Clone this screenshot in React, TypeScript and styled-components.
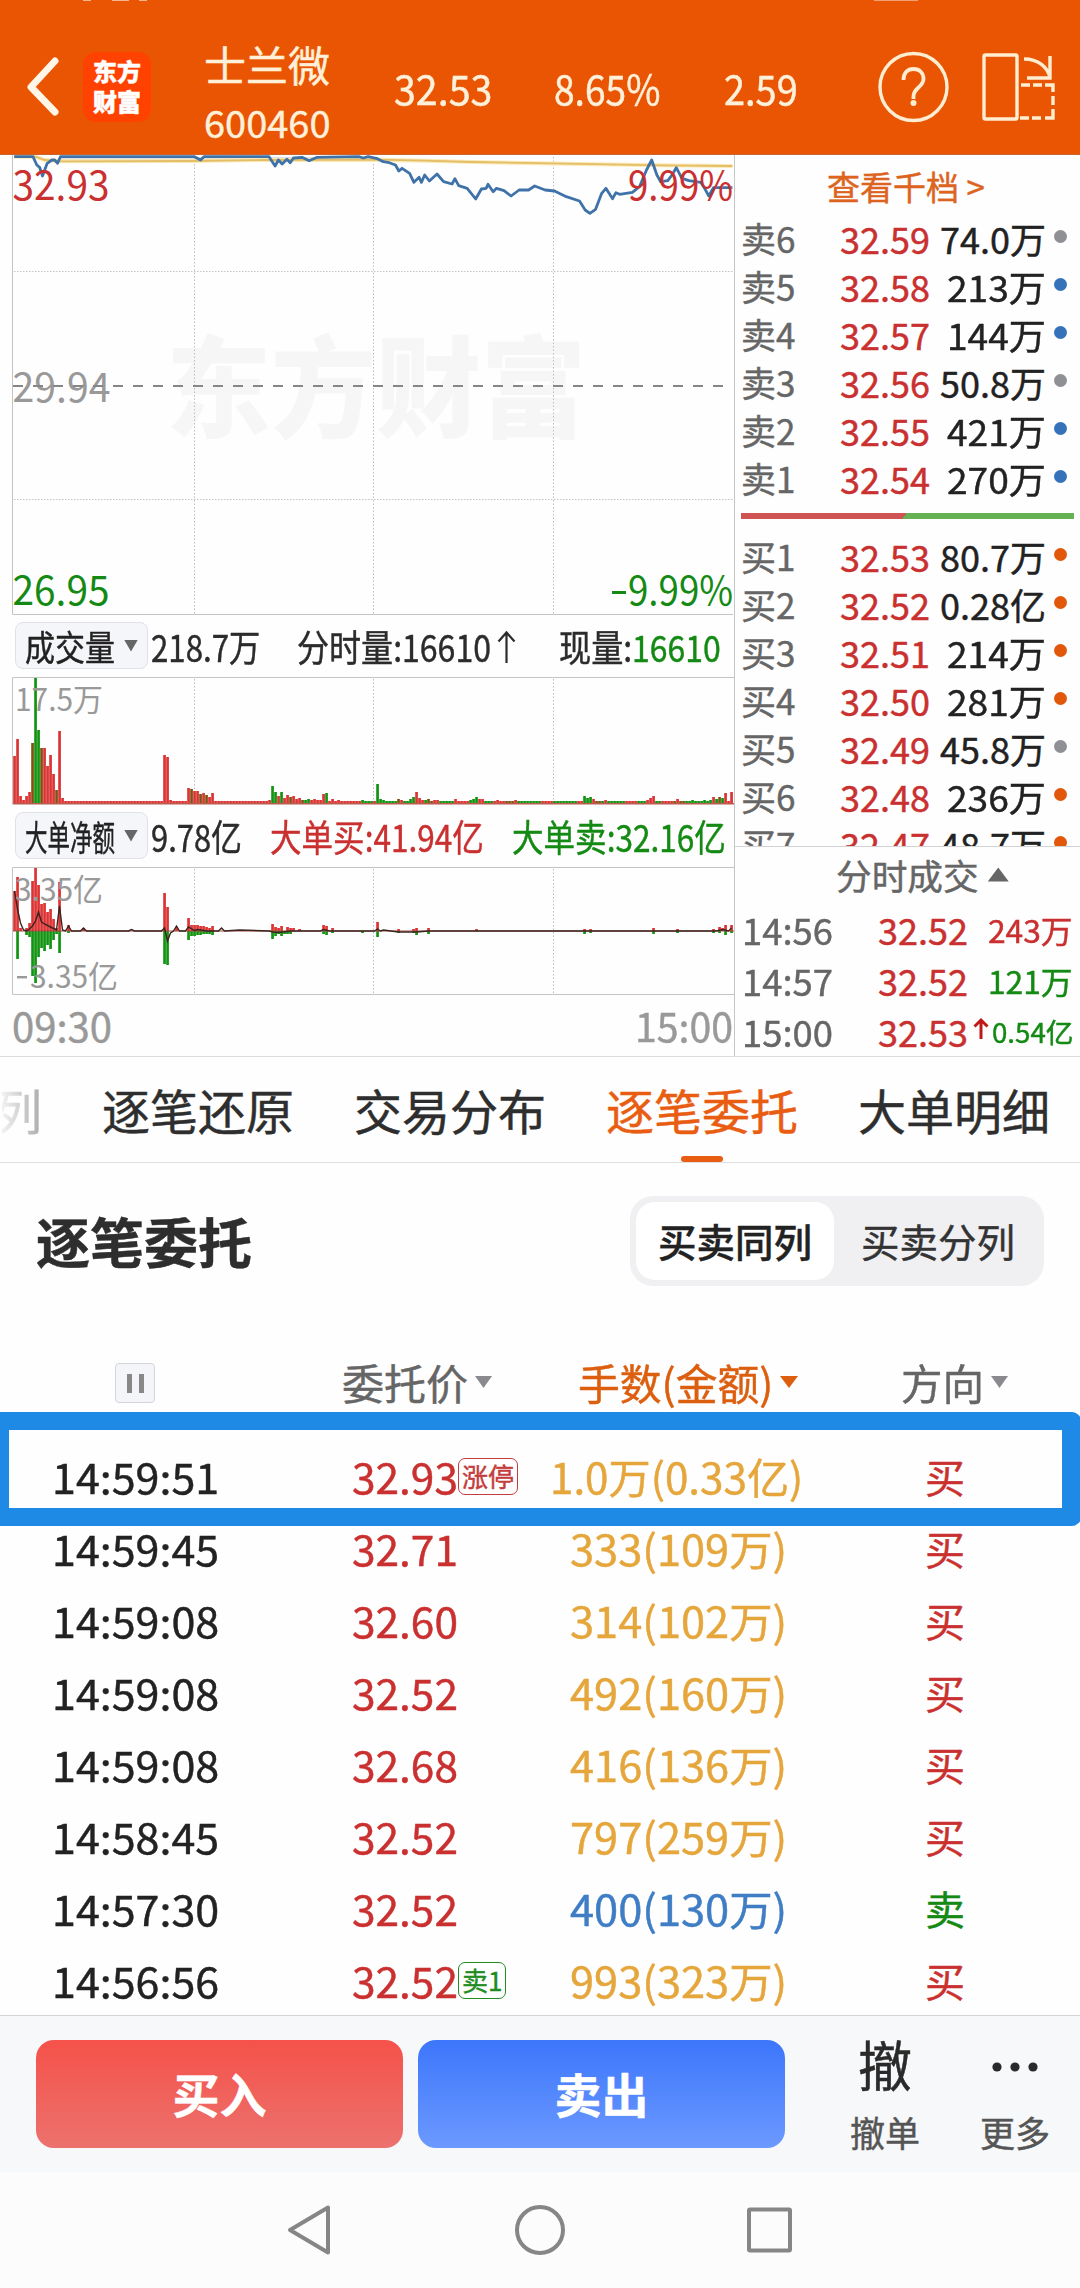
import React, { useLayoutEffect, useRef, useState } from "react";
import styled, { createGlobalStyle } from "styled-components";

const RED = "#c9302f";
const GREEN = "#148a14";
const ORANGE = "#e2580b";
const GOLD = "#e5a63c";
const FONT = '"Noto Sans CJK SC", "Noto Sans", sans-serif';

const Global = createGlobalStyle`
  * { box-sizing: border-box; }
  body { margin: 0; background: #fff; font-family: ${FONT}; overflow-x: hidden; }
`;

/* Text squeezed or stretched horizontally to a fixed advance width */
const FitBox = styled.span<{ $w: number }>`
  display: inline-block;
  flex: none;
  width: ${(p) => p.$w}px;
  white-space: pre;
`;
const FitInner = styled.span`
  display: inline-block;
  transform-origin: 0 50%;
`;
function Fit({ w, children }: { w: number; children: React.ReactNode }) {
  const ref = useRef<HTMLSpanElement>(null);
  const [k, setK] = useState(1);
  useLayoutEffect(() => {
    if (ref.current) setK(w / ref.current.offsetWidth);
  }, [w]);
  return (
    <FitBox $w={w}>
      <FitInner ref={ref} style={{ transform: `scaleX(${k})` }}>
        {children}
      </FitInner>
    </FitBox>
  );
}

const Screen = styled.div`
  width: 1080px;
  height: 2288px;
  display: flex;
  flex-direction: column;
  background: #fefefe;
  color: #2b2b2b;
  overflow: hidden;
  -webkit-text-stroke: 0.45px currentColor;
`;

/* ---------- header ---------- */
const Header = styled.header`
  position: relative;
  height: 155px;
  flex: none;
  background: #e95502;
  color: #fff0d9;
  display: grid;
  grid-template-columns: 83px 121px 190px 160px 170px 154px 103px 1fr;
  align-items: center;
  padding-top: 20px;
  border-bottom: 1px solid #c8642c;

  &::before {
    content: "";
    position: absolute;
    left: 0;
    right: 0;
    top: 0;
    height: 1px;
    background: linear-gradient(
      90deg,
      transparent 83px, #f3b48c 83px 91px, transparent 91px 112px, #f3b48c 112px 129px,
      transparent 129px 139px, #f3b48c 139px 147px, transparent 147px 874px, #f3a070 874px 918px, transparent 918px
    );
  }
`;
const BackIcon = styled.svg`
  margin-left: 22px;
`;
const Logo = styled.div`
  width: 68px;
  height: 70px;
  border-radius: 13px;
  background: #ff4200;
  color: #fff;
  font: 900 24px/30px ${FONT};
  text-align: center;
  padding-top: 4px;
`;
const StockName = styled.div`
  display: flex;
  flex-direction: column;
  font-size: 42px;
  line-height: 60px;
  padding-top: 9px;
`;
const StockCode = styled.div`
  font-size: 38px;
  line-height: 56px;
`;
const Quote = styled.div`
  font-size: 41px;
  line-height: 60px;
`;

/* ---------- market area ---------- */
const Market = styled.section`
  height: 902px;
  flex: none;
  display: grid;
  grid-template-columns: 735px 345px;
  border-bottom: 1px solid #dcdcdc;
`;
const ChartColumn = styled.div`
  border-right: 1px solid #c6c6c6;
  display: flex;
  flex-direction: column;
  overflow: hidden;
`;
const ChartSvg = styled.svg`
  display: block;
  flex: none;
  font-family: ${FONT};
`;
const InfoRow = styled.div`
  height: 62px;
  flex: none;
  display: flex;
  align-items: center;
  padding: 0 0 1px 15px;
  font-size: 37px;
  line-height: 56px;
  color: #2b2b2b;
`;
const Select = styled.div`
  width: 133px;
  height: 47px;
  flex: none;
  margin-right: 3px;
  padding-left: 9px;
  display: flex;
  align-items: center;
  gap: 9px;
  border: 1px solid #e0e2e8;
  border-radius: 8px;
  background: #f4f6fa;
  font-size: 35px;
  line-height: 40px;
  color: #222;
`;
const Segment = styled.span<{ $color?: string; $gap?: number }>`
  margin-left: ${(p) => p.$gap ?? 0}px;
  color: ${(p) => p.$color ?? "inherit"};
`;
const Caret = styled.i<{ $size: number; $h: number; $color: string; $up?: boolean }>`
  display: inline-block;
  flex: none;
  width: ${(p) => p.$size}px;
  height: ${(p) => p.$h}px;
  background: ${(p) => p.$color};
  clip-path: ${(p) => (p.$up ? "polygon(50% 0, 100% 100%, 0 100%)" : "polygon(0 0, 100% 0, 50% 100%)")};
`;
const TimeAxis = styled.div`
  flex: 1;
  display: flex;
  justify-content: space-between;
  padding: 0 1px 0 12px;
  font-size: 40px;
  line-height: 61px;
  color: #999;
`;

/* ---------- order book ---------- */
const BookColumn = styled.div`
  display: flex;
  flex-direction: column;
  overflow: hidden;
`;
const DepthLink = styled.div`
  height: 59px;
  flex: none;
  padding: 3px 0 0 92px;
  font-size: 33px;
  line-height: 56px;
  color: #dc6420;
`;
const BookList = styled.div`
  height: 633px;
  flex: none;
  overflow: hidden;
  border-bottom: 1px solid #d2d2d2;
`;
const BookRow = styled.div`
  height: 48px;
  display: grid;
  grid-template-columns: 99px 92px 1fr 34px;
  align-items: center;
  padding-left: 6px;
  font-size: 36px;
  line-height: 48px;
  white-space: nowrap;
`;
const Level = styled.span`
  color: #666;
  font-size: 35px;
`;
const Price = styled.span`
  color: ${RED};
`;
const Volume = styled.span`
  display: flex;
  justify-content: flex-end;
  font-size: 36px;
  color: #222;
`;
const Dot = styled.i<{ $color: string }>`
  width: 13px;
  height: 13px;
  margin: 0 0 4px 8px;
  border-radius: 50%;
  background: ${(p) => p.$color};
`;
const RatioBar = styled.div`
  height: 6px;
  margin: 11px 6px 13px 6px;
  background: linear-gradient(125deg, #cf5353 0 49.1%, #66b154 49.1%);
`;
const TradesTitle = styled.div`
  height: 59px;
  flex: none;
  display: flex;
  align-items: center;
  gap: 9px;
  padding: 0 0 4px 101px;
  font-size: 35.7px;
  line-height: 56px;
  color: #666;
`;
const TradeRow = styled.div`
  height: 51px;
  flex: none;
  display: grid;
  grid-template-columns: 136px 92px 1fr;
  align-items: center;
  padding: 0 7px 4px 7px;
  font-size: 36px;
  line-height: 47px;
  color: #666;
  white-space: nowrap;
`;
const TradeVolume = styled.span<{ $color: string; $size: number }>`
  display: flex;
  align-items: center;
  justify-content: flex-end;
  gap: 3px;
  font-size: ${(p) => p.$size}px;
  color: ${(p) => p.$color};
`;

/* ---------- tabs ---------- */
const Tabs = styled.nav`
  height: 106px;
  flex: none;
  display: flex;
  gap: 60px;
  padding-left: 2px;
  border-bottom: 1px solid #e0e0e0;
  font-size: 48px;
  line-height: 105px;
  white-space: nowrap;
`;
const Tab = styled.div<{ $active?: boolean }>`
  position: relative;
  color: ${(p) => (p.$active ? "#e95d12" : "#2e2e2e")};
  ${(p) =>
    p.$active &&
    `&::after {
      content: "";
      position: absolute;
      left: 75px;
      bottom: 0;
      width: 42px;
      height: 6px;
      border-radius: 3px;
      background: #e95d12;
    }`}
`;
const FadedTab = styled.div`
  width: 40px;
  display: flex;
  justify-content: flex-end;
  background: linear-gradient(90deg, #f2f2f2, #aaa);
  background-clip: text;
  color: transparent;
`;

/* ---------- orders ---------- */
const PanelHead = styled.div`
  height: 156px;
  flex: none;
  display: flex;
  justify-content: space-between;
  align-items: center;
  padding: 0 36px 0 36px;
`;
const PanelTitle = styled.h2`
  margin: 0;
  font-size: 54px;
  line-height: 76px;
  font-weight: 700;
  color: #2e2e2e;
`;
const Switcher = styled.div`
  width: 414px;
  height: 90px;
  padding: 6px;
  display: grid;
  grid-template-columns: 198px 1fr;
  border-radius: 23px;
  background: #f0f0f3;
`;
const SwitchItem = styled.div<{ $on?: boolean }>`
  border-radius: 19px;
  background: ${(p) => (p.$on ? "#fff" : "transparent")};
  font-weight: ${(p) => (p.$on ? 500 : 400)};
  color: ${(p) => (p.$on ? "#222" : "#333")};
  font-size: 38.5px;
  line-height: 76px;
  text-align: center;
  padding-left: ${(p) => (p.$on ? 0 : 4)}px;
`;
const TableHead = styled.div`
  height: 93px;
  flex: none;
  display: grid;
  grid-template-columns: 342px 236px 323px 1fr;
  align-items: start;
  font-size: 42px;
  line-height: 60px;
  color: #666;
  padding-top: 33px;
`;
const HeadCell = styled.div<{ $color?: string }>`
  display: flex;
  align-items: center;
  gap: 7px;
  color: ${(p) => p.$color ?? "#666"};
`;
const PauseButton = styled.div`
  width: 40px;
  height: 40px;
  margin: 11px 0 0 115px;
  display: flex;
  justify-content: center;
  align-items: center;
  gap: 7px;
  border: 1px solid #d3d5da;
  border-radius: 4px;
  background: #f3f5f9;
`;
const PauseBar = styled.i`
  width: 5px;
  height: 19px;
  background: #888;
`;
const OrderList = styled.div`
  position: relative;
  height: 604px;
  flex: none;
  padding-top: 28px;
  border-bottom: 1px solid #d2d4d6;
`;
const OrderRow = styled.div`
  height: 72px;
  display: grid;
  grid-template-columns: 352px 107px 91px 250px 1fr;
  align-items: center;
  font-size: 42px;
  line-height: 66px;
  white-space: nowrap;
`;
const OrderTime = styled.span`
  padding-left: 52px;
  color: #222;
`;
const TagCell = styled.span`
  display: flex;
`;
const Badge = styled.span<{ $color: string }>`
  height: 37px;
  padding: 0 3px;
  margin-left: -1px;
  border: 1.5px solid ${(p) => p.$color};
  border-radius: 7px;
  font-size: 26px;
  line-height: 33px;
  color: ${(p) => p.$color};
`;
const Amount = styled.span<{ $color: string }>`
  text-align: center;
  color: ${(p) => p.$color};
`;
const Side = styled.span<{ $color: string }>`
  padding-left: 125px;
  font-size: 40px;
  color: ${(p) => p.$color};
`;
const Highlight = styled.div`
  position: absolute;
  left: -10px;
  right: -1px;
  top: 0;
  height: 114px;
  border: solid #1f8ae6;
  border-width: 18px 19px 18px 19px;
  border-radius: 9px;
`;

/* ---------- bottom ---------- */
const ActionBar = styled.div`
  height: 156px;
  flex: none;
  background: #f6f8fa;
  display: grid;
  grid-template-columns: 367px 367px 170px 60px;
  column-gap: 15px;
  padding: 24px 0 0 36px;
`;
const TradeButton = styled.div<{ $from: string; $to: string }>`
  height: 108px;
  border-radius: 18px;
  background: linear-gradient(${(p) => p.$from}, ${(p) => p.$to});
  color: #fff;
  font-size: 47px;
  font-weight: 700;
  line-height: 106px;
  text-align: center;
`;
const Tool = styled.div`
  display: flex;
  flex-direction: column;
  align-items: center;
  font-size: 35px;
  line-height: 50px;
  color: #555;
  white-space: nowrap;
`;
const ToolGlyph = styled.div`
  height: 67px;
  font-size: 54px;
  line-height: 48px;
  color: #2a2a2a;
  display: flex;
  align-items: flex-start;
`;
const NavBar = styled.div`
  flex: 1;
  background: #fcfcfc;
`;

/* ---------- data ---------- */
type Pt = [number, number];
const pricePath: Pt[] = [
  [30, 20], [70, 20], [78, 45], [84, 52], [90, 78], [100, 40], [110, 30], [116, 30], [122, 40], [128, 20], [412, 20], [425, 30], [432, 20],
  [570, 20], [583, 48], [590, 30], [598, 42], [608, 28], [615, 38], [622, 24], [640, 22], [655, 32], [672, 22], [760, 20], [770, 24], [780, 20], [800, 26],
  [812, 35], [825, 38], [838, 45], [845, 63], [852, 55], [868, 70], [877, 97], [888, 82], [893, 97], [900, 75], [910, 93],
  [926, 72], [940, 95], [958, 102], [964, 86], [972, 107], [990, 115], [1008, 147], [1020, 117], [1030, 115], [1034, 103], [1045, 125],
  [1052, 115], [1068, 122], [1083, 138], [1100, 120], [1120, 120], [1133, 108], [1155, 120], [1175, 123], [1200, 140],
  [1228, 153], [1240, 180], [1250, 190], [1262, 178], [1275, 130], [1284, 115], [1298, 146], [1305, 128], [1313, 133],
  [1340, 127], [1355, 110], [1370, 60], [1381, 30], [1392, 75], [1400, 95], [1415, 92], [1424, 75], [1433, 53], [1445, 85],
  [1460, 92], [1485, 97], [1493, 115], [1502, 138], [1512, 113], [1552, 113],
];
const averagePath: Pt[] = [
  [30, 20], [75, 20], [95, 30], [130, 34], [400, 33], [560, 30], [800, 29], [900, 32], [1000, 36], [1200, 41], [1400, 46], [1552, 48],
];
const toLine = (pts: Pt[]) => pts.map(([x, y]) => `${(x / 2.119).toFixed(1)},${(y / 3 - 5).toFixed(1)}`).join(" ");

const R = "#dc3434";
const G = "#129412";
const B = "#7d5414";
const volume: Record<number, [number, string]> = {
  0: [48, R], 1: [65, R], 2: [8, R], 3: [4, R], 4: [8, R], 5: [12, R], 6: [61, B], 7: [126, G], 8: [74, G], 9: [56, B],
  10: [56, R], 11: [38, R], 12: [49, R], 13: [30, R], 14: [14, B], 15: [73, R], 16: [6, R], 50: [49, R], 51: [47, R], 52: [4, R],
  58: [16, R], 59: [15, B], 60: [13, R], 61: [13, R], 62: [10, B], 63: [11, R], 64: [9, B], 65: [7, R], 66: [11, R],
  85: [4, R], 86: [18, G], 87: [12, G], 88: [8, R], 89: [12, G], 90: [6, R], 91: [9, R], 92: [7, B], 93: [8, R], 94: [5, R], 95: [6, R],
  96: [4, B], 97: [4, G], 98: [5, G], 99: [4, R], 100: [5, R], 101: [4, R], 102: [4, R], 103: [10, R], 104: [11, G], 106: [5, R],
  108: [4, R], 116: [4, G], 121: [20, G], 122: [5, G], 123: [4, G], 128: [5, B], 129: [4, R], 132: [5, G], 133: [7, G], 134: [12, R], 135: [6, R],
  136: [4, R], 137: [4, G], 138: [5, B], 140: [4, R], 141: [4, R], 147: [5, R], 152: [4, G], 153: [5, G], 154: [7, G], 155: [5, R], 156: [5, R],
  161: [4, R], 167: [4, R], 190: [8, G], 191: [6, G], 192: [7, G], 193: [5, R], 197: [4, R], 211: [4, R], 212: [6, R], 213: [8, R], 221: [5, R],
  226: [4, G], 230: [4, G], 232: [4, G], 233: [7, R], 234: [5, G], 235: [7, B], 236: [6, G], 237: [11, R], 238: [3, R], 239: [12, R],
};
const baseColor = (i: number) => (i < 117 ? R : [G, G, R, G, G, R, B][Math.floor(i / 4) % 7]);

const flowUp: Record<number, number> = {
  0: 40, 1: 54, 2: 3, 4: 3, 5: 8, 6: 50, 7: 63, 8: 46, 9: 27, 10: 28, 11: 19, 12: 22, 13: 12, 14: 3, 15: 49, 18: 6, 23: 3, 50: 38, 51: 24, 54: 4,
  58: 13, 59: 6, 60: 6, 61: 6, 62: 5, 63: 5, 64: 4, 65: 3, 66: 5, 86: 7, 87: 4, 88: 3, 89: 5, 91: 4, 92: 3, 93: 3, 95: 2, 103: 6, 104: 5, 106: 3,
  121: 9, 128: 2, 133: 2, 134: 3, 138: 3, 154: 2, 190: 2, 192: 2, 213: 3, 221: 2, 233: 2, 235: 4, 236: 3, 237: 6, 239: 6,
};
const flowDown: Record<number, number> = {
  1: 28, 4: 4, 5: 6, 6: 45, 7: 52, 8: 26, 9: 17, 10: 20, 11: 14, 12: 18, 13: 9, 14: 3, 15: 22, 18: 2, 50: 33, 51: 34, 58: 9, 59: 5, 60: 5, 61: 4, 62: 4,
  63: 3, 64: 3, 65: 3, 66: 4, 86: 8, 87: 5, 88: 3, 89: 5, 90: 3, 91: 3, 92: 3, 103: 3, 104: 4, 106: 2, 116: 2, 121: 6, 128: 2, 133: 2, 134: 4, 138: 3,
  190: 3, 192: 2, 213: 3, 221: 2, 233: 2, 235: 2, 237: 4, 239: 2,
};
const netLine: Pt[] = [
  [0, 40], [1, 22], [2, 8], [3, 1], [4, 0], [5, 2], [6, 5], [7, 10], [8, 19], [9, 9], [10, 7], [12, 4], [14, 1], [15, 25], [16, 1], [17, 0], [18, 5], [19, 0],
  [22, 0], [23, 3], [24, 0], [38, 0], [39, 1.5], [40, 0], [49, 0], [50, 3], [51, -10], [52, -2], [53, 0], [54, 5], [55, 0], [57, 0], [58, 4], [60, 0.5],
  [61, 1.5], [64, 0], [68, 0], [69, 3], [70, 0], [75, 1], [85, 0], [86, -1], [88, -1.5], [92, 0], [102, 0], [103, 1.5], [105, 0], [118, 0], [120, 0], [121, 2],
  [122, 0], [123, 1], [128, -1], [134, -1], [138, 0], [190, 0], [234, 0], [236, 1.5], [238, 0], [239, 3],
];

const GREY = "#8f8f96";
const BLUE = "#3672b9";
const asks = [
  ["卖6", "32.59", "74.0万", GREY],
  ["卖5", "32.58", "213万", BLUE],
  ["卖4", "32.57", "144万", BLUE],
  ["卖3", "32.56", "50.8万", GREY],
  ["卖2", "32.55", "421万", BLUE],
  ["卖1", "32.54", "270万", BLUE],
];
const bids = [
  ["买1", "32.53", "80.7万", ORANGE],
  ["买2", "32.52", "0.28亿", ORANGE],
  ["买3", "32.51", "214万", ORANGE],
  ["买4", "32.50", "281万", ORANGE],
  ["买5", "32.49", "45.8万", GREY],
  ["买6", "32.48", "236万", ORANGE],
  ["买7", "32.47", "48.7万", ORANGE],
];
const orders: { t: string; p: string; a: string; buy: boolean; tag?: string; tagColor?: string }[] = [
  { t: "14:59:51", p: "32.93", a: "1.0万(0.33亿)", buy: true, tag: "涨停", tagColor: "#c43c3c" },
  { t: "14:59:45", p: "32.71", a: "333(109万)", buy: true },
  { t: "14:59:08", p: "32.60", a: "314(102万)", buy: true },
  { t: "14:59:08", p: "32.52", a: "492(160万)", buy: true },
  { t: "14:59:08", p: "32.68", a: "416(136万)", buy: true },
  { t: "14:58:45", p: "32.52", a: "797(259万)", buy: true },
  { t: "14:57:30", p: "32.52", a: "400(130万)", buy: false },
  { t: "14:56:56", p: "32.52", a: "993(323万)", buy: true, tag: "卖1", tagColor: "#218c21" },
];

const Grid = ({ h }: { h: number }) => (
  <g stroke="#bdbdbd" strokeDasharray="1.5 2">
    {[194.5, 373.5, 553.5].map((x) => (
      <line key={x} x1={x} x2={x} y1={2} y2={h} />
    ))}
  </g>
);

function PriceChart() {
  return (
    <ChartSvg width={734} height={460} viewBox="0 0 734 460">
      <text x={166} y={274} fontSize={110} fontWeight={900} fill="#f6f6f6" textLength={420} lengthAdjust="spacingAndGlyphs">
        东方财富
      </text>
      <Grid h={459} />
      <g stroke="#c4c4c4" strokeDasharray="1.5 1.5">
        <line x1={14} x2={733} y1={116.5} y2={116.5} />
        <line x1={14} x2={733} y1={344.5} y2={344.5} />
      </g>
      <path d="M12.5 0V459.5H733" fill="none" stroke="#c4c4c4" />
      <path d="M60 2H376V5L60 6Z" fill="#8f98ab" opacity={0.3} />
      <polyline points={toLine(averagePath)} fill="none" stroke="#fbe9b4" strokeWidth={4} />
      <polyline points={toLine(averagePath)} fill="none" stroke="#e3bd68" strokeWidth={1.8} />
      <polyline points={toLine(pricePath)} fill="none" stroke="#3f72a8" strokeWidth={2.8} strokeLinejoin="round" />
      <g fontSize={40}>
        <g fill={RED}>
          <text x={12.5} y={44.5} textLength={97} lengthAdjust="spacingAndGlyphs">32.93</text>
          <text x={628} y={44.5} textLength={105} lengthAdjust="spacingAndGlyphs">9.99%</text>
        </g>
        <text x={12.5} y={246.500} fill="#999" textLength={98} lengthAdjust="spacingAndGlyphs">29.94</text>
        <g fill={GREEN}>
          <text x={12.5} y={449.500} textLength={97} lengthAdjust="spacingAndGlyphs">26.95</text>
          <text x={628} y={449.500} textLength={105} lengthAdjust="spacingAndGlyphs">9.99%</text>
          <rect x={612} y={436} width={14} height={3} />
        </g>
      </g>
      <line x1={13} x2={733} y1={231} y2={231} stroke="#868686" strokeWidth={2} strokeDasharray="10 10" />
    </ChartSvg>
  );
}

function VolumeChart() {
  return (
    <ChartSvg width={734} height={128} viewBox="0 0 734 128">
      <path d="M734 .5H12.5V127.5" fill="none" stroke="#c4c4c4" />
      <Grid h={126} />
      {Array.from({ length: 240 }, (_, i) => {
        const [h, c] = volume[i] ?? [3, baseColor(i)];
        return <rect key={i} x={13.2 + i * 3} y={127 - h} width={2.7} height={h} fill={c} />;
      })}
      <text x={15} y={34} fontSize={31} fill="#999" textLength={88} lengthAdjust="spacingAndGlyphs">17.5万</text>
      <rect x={13} y={126} width={721} height={1.5} fill="#b95c4e" />
    </ChartSvg>
  );
}

function FlowChart() {
  return (
    <ChartSvg width={734} height={128} viewBox="0 0 734 128">
      <path d="M734 .5H12.5V127.5H734" fill="none" stroke="#c4c4c4" />
      <Grid h={126} />
      {Object.entries(flowUp).map(([i, h]) => (
        <rect key={i} x={13.2 + +i * 3} y={64 - h} width={2.7} height={h} fill={R} />
      ))}
      {Object.entries(flowDown).map(([i, h]) => (
        <rect key={i} x={13.2 + +i * 3} y={64} width={2.7} height={h} fill={G} />
      ))}
      <line x1={13} x2={734} y1={64} y2={64} stroke="#a04a3c" strokeWidth={1.2} />
      <polyline
        points={netLine.map(([i, v]) => `${14.5 + i * 3},${64 - v}`).join(" ")}
        fill="none"
        stroke="#3a2320"
        strokeWidth={1.4}
      />
      <g fontSize={31} fill="#999">
        <text x={15} y={34} textLength={88} lengthAdjust="spacingAndGlyphs">3.35亿</text>
        <rect x={17} y={109} width={10} height={2.4} />
        <text x={30} y={120.500} textLength={88} lengthAdjust="spacingAndGlyphs">3.35亿</text>
      </g>
    </ChartSvg>
  );
}

const BookLine = ({ row }: { row: string[] }) => (
  <BookRow>
    <Level>{row[0]}</Level>
    <Price>{row[1]}</Price>
    <Volume>
      <Fit w={row[2].length === 4 ? 99 : 106}>{row[2]}</Fit>
    </Volume>
    <Dot $color={row[3]} />
  </BookRow>
);

export default function App() {
  return (
    <Screen>
      <Global />
      <Header>
        <BackIcon width={42} height={64} viewBox="0 0 42 64" fill="none" stroke="#fff6e8" strokeWidth={7} strokeLinecap="round" strokeLinejoin="round">
          <path d="M33 6L9 32l24 25" />
        </BackIcon>
        <Logo>东方<br />财富</Logo>
        <StockName>
          <Fit w={126}>士兰微</Fit>
          <StockCode><Fit w={127}>600460</Fit></StockCode>
        </StockName>
        <Quote><Fit w={98}>32.53</Fit></Quote>
        <Quote><Fit w={106}>8.65%</Fit></Quote>
        <Quote><Fit w={74}>2.59</Fit></Quote>
        <svg width={72} height={74} viewBox="0 0 72 74" fill="none" stroke="#ffedd2" strokeWidth={3.4}>
          <ellipse cx={35.5} cy={37} rx={33.5} ry={33.5} />
          <path d="M25.5 30c0-7 4-11 10-11s10 4 10 10c0 8-10 9-10 17v3" strokeWidth={3.8} />
          <circle cx={35.5} cy={53} r={3} fill="#ffedd2" stroke="none" />
        </svg>
        <svg width={76} height={70} viewBox="0 0 76 70" fill="none" stroke="#ffedd2" strokeWidth={3.4}>
          <rect x={3} y={3} width={33} height={64} rx={1.5} />
          <path d="M43 7c14 0 24 8 26 19M69 4v22H46" />
          <path d="M40 33h9M52 33h9M64 33h8v7M72 44v9M72 57v9h-8M60 66h-9M48 66h-9" />
        </svg>
      </Header>

      <Market>
        <ChartColumn>
          <PriceChart />
          <InfoRow>
            <Select>
              <Fit w={90}>成交量</Fit>
              <Caret $size={14} $h={12} $color="#666" />
            </Select>
            <Segment><Fit w={109}>218.7万</Fit></Segment>
            <Segment $gap={37}><Fit w={194}>分时量:16610</Fit></Segment>
            <svg width={26} height={36} viewBox="22 0 26 36" fill="none" stroke="#2b2b2b" strokeWidth={2.2}>
              <path d="M37.5 35V5M29.500 13.500L37.500 4.500L45.500 13.500" />
            </svg>
            <Segment $gap={42}><Fit w={73}>现量:</Fit></Segment>
            <Segment $color={GREEN}><Fit w={89}>16610</Fit></Segment>
          </InfoRow>
          <VolumeChart />
          <InfoRow>
            <Select>
              <Fit w={90}>大单净额</Fit>
              <Caret $size={14} $h={12} $color="#666" />
            </Select>
            <Segment><Fit w={91}>9.78亿</Fit></Segment>
            <Segment $gap={28} $color={RED}><Fit w={214}>大单买:41.94亿</Fit></Segment>
            <Segment $gap={28} $color={GREEN}><Fit w={214}>大单卖:32.16亿</Fit></Segment>
          </InfoRow>
          <FlowChart />
          <TimeAxis>
            <Fit w={100}>09:30</Fit>
            <Fit w={98}>15:00</Fit>
          </TimeAxis>
        </ChartColumn>

        <BookColumn>
          <DepthLink>查看千档 &gt;</DepthLink>
          <BookList>
            {asks.map((r) => <BookLine key={r[0]} row={r} />)}
            <RatioBar />
            {bids.map((r) => <BookLine key={r[0]} row={r} />)}
          </BookList>
          <TradesTitle>
            分时成交
            <Caret $size={21} $h={14} $color="#666" $up />
          </TradesTitle>
          <TradeRow>
            <Fit w={91}>14:56</Fit>
            <Price>32.52</Price>
            <TradeVolume $color={RED} $size={31}><Fit w={85}>243万</Fit></TradeVolume>
          </TradeRow>
          <TradeRow>
            <Fit w={91}>14:57</Fit>
            <Price>32.52</Price>
            <TradeVolume $color={GREEN} $size={31}><Fit w={85}>121万</Fit></TradeVolume>
          </TradeRow>
          <TradeRow>
            <Fit w={91}>15:00</Fit>
            <Price>32.53</Price>
            <TradeVolume $color={GREEN} $size={27}>
              <svg width={16} height={30} viewBox="0 3 16 30" fill="none" stroke="#c01818" strokeWidth={3}>
                <path d="M8 25V6M1.500 12.500L8 6l6.500 6.500" />
              </svg>
              <Fit w={81}>0.54亿</Fit>
            </TradeVolume>
          </TradeRow>
        </BookColumn>
      </Market>

      <Tabs>
        <FadedTab>列</FadedTab>
        <Tab>逐笔还原</Tab>
        <Tab>交易分布</Tab>
        <Tab $active>逐笔委托</Tab>
        <Tab>大单明细</Tab>
      </Tabs>

      <PanelHead>
        <PanelTitle>逐笔委托</PanelTitle>
        <Switcher>
          <SwitchItem $on>买卖同列</SwitchItem>
          <SwitchItem>买卖分列</SwitchItem>
        </Switcher>
      </PanelHead>

      <TableHead>
        <PauseButton><PauseBar /><PauseBar /></PauseButton>
        <HeadCell>委托价<Caret $size={17} $h={12} $color="#8a8a8e" /></HeadCell>
        <HeadCell $color="#dc5f0f"><Fit w={195}>手数(金额)</Fit><Caret $size={18} $h={12} $color="#dc5f0f" /></HeadCell>
        <HeadCell><Fit w={83}>方向</Fit><Caret $size={17} $h={12} $color="#8a8a8e" /></HeadCell>
      </TableHead>

      <OrderList>
        {orders.map((o, i) => (
          <OrderRow key={i}>
            <OrderTime><Fit w={167}>{o.t}</Fit></OrderTime>
            <Price><Fit w={106}>{o.p}</Fit></Price>
            <TagCell>{o.tag && <Badge $color={o.tagColor!}>{o.tag}</Badge>}</TagCell>
            <Amount $color={o.buy ? GOLD : "#3f7dc4"}>
              <Fit w={o.a.length > 9 ? 253 : 217}>{o.a}</Fit>
            </Amount>
            <Side $color={o.buy ? RED : GREEN}>{o.buy ? "买" : "卖"}</Side>
          </OrderRow>
        ))}
        <Highlight />
      </OrderList>

      <ActionBar>
        <TradeButton $from="#f5524a" $to="#ec716d">买入</TradeButton>
        <TradeButton $from="#3c76fb" $to="#6c99ff">卖出</TradeButton>
        <Tool>
          <ToolGlyph>撤</ToolGlyph>
          撤单
        </Tool>
        <Tool>
          <ToolGlyph>
            <svg width={50} height={54} viewBox="0 0 50 54" fill="#2a2a2a">
              <circle cx={7} cy={27} r={4.6} />
              <circle cx={25} cy={27} r={4.6} />
              <circle cx={43} cy={27} r={4.6} />
            </svg>
          </ToolGlyph>
          更多
        </Tool>
      </ActionBar>

      <NavBar>
        <svg width={1080} height={116} viewBox="0 0 1080 116" fill="none" stroke="#868686" strokeWidth={4} strokeLinejoin="round">
          <path d="M328 35.500V80.500L290 58Z" />
          <circle cx={540} cy={58} r={23} />
          <rect x={749} y={37.500} width={41} height={41} rx={1} />
        </svg>
      </NavBar>
    </Screen>
  );
}
